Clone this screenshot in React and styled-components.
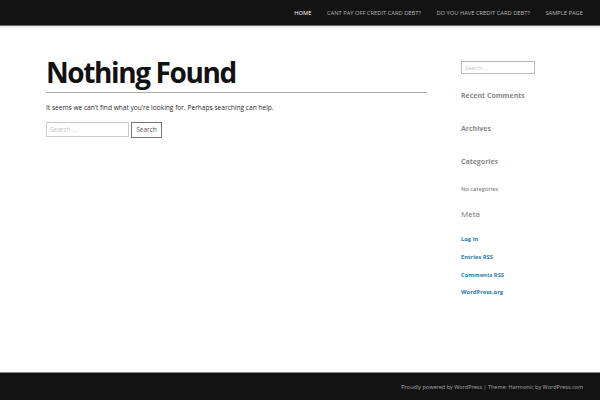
import styled, { createGlobalStyle } from "styled-components";

const GlobalStyle = createGlobalStyle`
  html, body {
    margin: 0;
    padding: 0;
    background: #fff;
    font-family: "Open Sans", "Noto Sans", sans-serif;
  }
`;

const navItems = [
  { label: "Home", active: true },
  { label: "Cant pay off credit card debt?" },
  { label: "Do you have credit card debt?" },
  { label: "Sample Page" },
];

const widgets = ["Recent Comments", "Archives", "Categories"];
const metaLinks = ["Log in", "Entries RSS", "Comments RSS", "WordPress.org"];

const App = () => {
  return (
    <Page>
      <GlobalStyle />
      <Header>
        <Nav>
          {navItems.map((item) => (
            <NavLink key={item.label} $active={item.active}>
              {item.label}
            </NavLink>
          ))}
        </Nav>
      </Header>
      <Body>
        <Main>
          <Title>Nothing Found</Title>
          <Message>
            It seems we can’t find what you’re looking for. Perhaps searching
            can help.
          </Message>
          <SearchForm>
            <SearchInput placeholder="Search …" />
            <SearchButton>Search</SearchButton>
          </SearchForm>
        </Main>
        <Sidebar>
          <SideSearch placeholder="Search …" />
          {widgets.map((w) => (
            <WidgetTitle key={w}>{w}</WidgetTitle>
          ))}
          <Muted>No categories</Muted>
          <MetaTitle>Meta</MetaTitle>
          <LinkList>
            {metaLinks.map((l) => (
              <MetaLink key={l}>{l}</MetaLink>
            ))}
          </LinkList>
        </Sidebar>
      </Body>
      <Footer>
        <FooterText>
          Proudly powered by WordPress | Theme: Harmonic by WordPress.com
        </FooterText>
      </Footer>
    </Page>
  );
};

export default App;

const Page = styled.div`
  width: 600px;
  height: 400px;
  display: flex;
  flex-direction: column;
  overflow: hidden;
`;

const Header = styled.header`
  height: 25px;
  flex-shrink: 0;
  background: #131313;
  border-bottom: 1px solid #6a6a6a;
  box-shadow: 0 1px 0 #ececec, 0 2px 0 #f6f6f6;
  display: flex;
  justify-content: flex-end;
  align-items: center;
  padding-right: 17px;
`;

const Nav = styled.nav`
  display: flex;
  gap: 15.5px;
  padding-top: 1px;
`;

const NavLink = styled.a`
  font-size: 5.75px;
  text-transform: uppercase;
  color: ${(p) => (p.$active ? "#ffffff" : "#b8b8b8")};
`;

const Body = styled.div`
  flex: 1;
  display: flex;
  padding: 29px 17px 0 46px;
  gap: 34px;
`;

const Main = styled.main`
  width: 381px;
  flex-shrink: 0;
`;

const Title = styled.h1`
  margin: 0;
  font-size: 28px;
  font-weight: 700;
  color: #111;
  line-height: 35px;
  letter-spacing: -1.4px;
  padding-bottom: 1.5px;
  border-bottom: 1.5px solid #aaa;
`;

const Message = styled.p`
  margin: 10px 0 0;
  font-size: 6.6px;
  line-height: 9px;
  color: #2a2a2a;
`;

const SearchForm = styled.div`
  display: flex;
  align-items: center;
  gap: 2px;
  margin-top: 10px;
`;

const SearchInput = styled.input`
  width: 83px;
  height: 15px;
  box-sizing: border-box;
  border: 1px solid #c9c9c9;
  padding: 0 3px;
  font-family: inherit;
  font-size: 6.5px;
  &::placeholder {
    color: #c2c2c2;
  }
`;

const SearchButton = styled.button`
  width: 31px;
  height: 16px;
  box-sizing: border-box;
  background: #fff;
  border: 1px solid #777;
  font-family: inherit;
  font-size: 6.5px;
  color: #555;
  padding: 0;
`;

const Sidebar = styled.aside`
  flex: 1;
  display: flex;
  flex-direction: column;
  align-items: flex-start;
  padding-top: 6px;
`;

const SideSearch = styled(SearchInput)`
  width: 74px;
  height: 13px;
  font-size: 5.5px;
  border-color: #bbb;
  margin-bottom: 17px;
`;

const WidgetTitle = styled.h3`
  margin: 0 0 23px;
  font-size: 7px;
  font-weight: 700;
  color: #8a8a8a;
  line-height: 10px;
`;

const Muted = styled.div`
  margin-top: -4.5px;
  font-size: 5.6px;
  font-weight: 600;
  line-height: 7px;
  color: #888;
`;

const MetaTitle = styled.h3`
  margin: 16.5px 0 0;
  font-size: 8px;
  font-weight: 400;
  color: #777;
  line-height: 10px;
`;

const LinkList = styled.ul`
  list-style: none;
  margin: 17px 0 0;
  padding: 0;
  display: flex;
  flex-direction: column;
  gap: 10.3px;
`;

const MetaLink = styled.li`
  font-size: 5.8px;
  font-weight: 700;
  color: #2a7ca5;
  line-height: 7.5px;
`;

const Footer = styled.footer`
  height: 27px;
  flex-shrink: 0;
  background: #131313;
  border-top: 1px solid #8a8a8a;
  display: flex;
  justify-content: flex-end;
  align-items: center;
  padding-right: 17px;
`;

const FooterText = styled.div`
  font-size: 5.5px;
  color: #a9a9a9;
`;
